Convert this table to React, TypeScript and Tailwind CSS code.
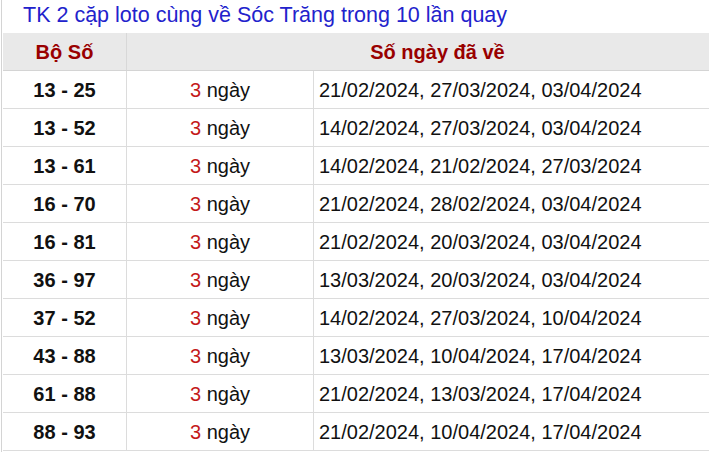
import React from "react";

const rows: [string, string][] = [
  ["13 - 25", "21/02/2024, 27/03/2024, 03/04/2024"],
  ["13 - 52", "14/02/2024, 27/03/2024, 03/04/2024"],
  ["13 - 61", "14/02/2024, 21/02/2024, 27/03/2024"],
  ["16 - 70", "21/02/2024, 28/02/2024, 03/04/2024"],
  ["16 - 81", "21/02/2024, 20/03/2024, 03/04/2024"],
  ["36 - 97", "13/03/2024, 20/03/2024, 03/04/2024"],
  ["37 - 52", "14/02/2024, 27/03/2024, 10/04/2024"],
  ["43 - 88", "13/03/2024, 10/04/2024, 17/04/2024"],
  ["61 - 88", "21/02/2024, 13/03/2024, 17/04/2024"],
  ["88 - 93", "21/02/2024, 10/04/2024, 17/04/2024"],
];

export default function App() {
  return (
    <div
      className="w-[709px] h-[452px] overflow-hidden bg-white"
      style={{ fontFamily: '"Liberation Sans", Arial, sans-serif' }}
    >
      <div className="ml-[1px] border-l border-[#d4d4d4] h-full">
        <div className="h-[33px] pl-[21px] pt-[2px] text-[21.5px] leading-[27px] text-[#2222cc]">
          TK 2 cặp loto cùng về Sóc Trăng trong 10 lần quay
        </div>
        <div className="w-[745px] ml-[1px]">
          <div className="flex h-[38px] bg-[#e9e9e9] border-b border-[#d4d4d4] text-[20px] font-bold text-[#990000]">
            <div className="w-[124px] border-r border-[#d8d8d8] flex items-center justify-center">
              Bộ Số
            </div>
            <div className="flex-1 flex items-center justify-center">Số ngày đã về</div>
          </div>
          {rows.map(([pair, dates]) => (
            <div
              key={pair}
              className="flex h-[38px] border-b border-[#dcdcdc] text-[20px] text-[#111]"
            >
              <div className="w-[124px] border-r border-[#dcdcdc] flex items-center justify-center font-bold">
                {pair}
              </div>
              <div className="w-[187px] border-r border-[#dcdcdc] flex items-center justify-center">
                <span className="text-[#c41a1a]">3</span>
                <span>&nbsp;ngày</span>
              </div>
              <div className="flex-1 flex items-center pl-[5px]">{dates}</div>
            </div>
          ))}
        </div>
      </div>
    </div>
  );
}
